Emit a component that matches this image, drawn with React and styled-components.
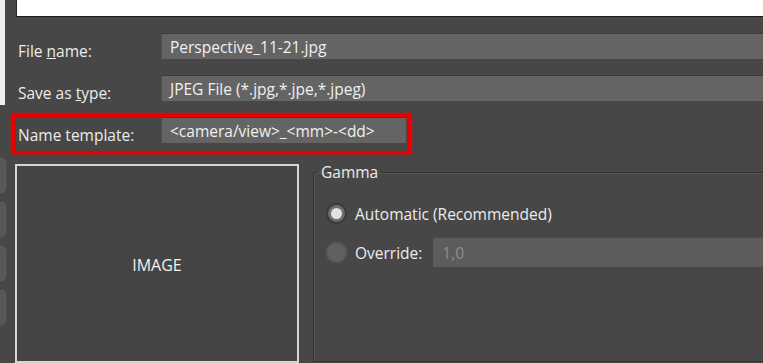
import React from 'react'
import styled, { createGlobalStyle } from 'styled-components'

const GlobalStyle = createGlobalStyle`
  html, body {
    margin: 0;
    padding: 0;
    background: #474747;
    overflow: hidden;
  }
  body {
    font-family: "Open Sans", "Noto Sans", "Liberation Sans", sans-serif;
    color: #e8e8e8;
  }
`

const Page = styled.div`
  display: flex;
  flex-direction: row;
  width: 763px;
  height: 363px;
  overflow: hidden;
  background: #474747;
`

const LeftRail = styled.div`
  display: flex;
  flex-direction: column;
  width: 7px;
  flex-shrink: 0;
`

const BehindWindow = styled.div`
  height: 105px;
  width: 5px;
  background: #f0f0f0;
  margin-bottom: 53px;
`

const RailButtons = styled.div`
  display: flex;
  flex-direction: column;
  gap: 9px;
`

const RailButton = styled.div`
  width: 5px;
  height: 33px;
  background: #575757;
  border: 1px solid #606060;
  border-left: none;
  border-radius: 0 5px 5px 0;
`

const Main = styled.div`
  flex: 1;
  display: flex;
  flex-direction: column;
  min-width: 0;
`

const FileList = styled.div`
  height: 19px;
  margin-left: 9px;
  background: #ffffff;
  border-left: 1px solid #2a2a2a;
  border-bottom: 1px solid #1c1c1c;
`

const Form = styled.div`
  display: flex;
  flex-direction: column;
  gap: 2px;
  margin-top: 13px;
  margin-left: 5px;
`

const Row = styled.div`
  display: grid;
  grid-template-columns: 143px ${p => (p.$highlight ? '245px' : '1fr')};
  align-items: start;
  padding: 0 0 6px 3px;
  border: 3px solid ${p => (p.$highlight ? '#e80000' : 'transparent')};
  width: ${p => (p.$highlight ? 'fit-content' : 'auto')};
  margin-right: ${p => (p.$highlight ? '0' : '-30px')};
  padding-right: ${p => (p.$highlight ? '2px' : '0')};
  box-shadow: ${p =>
    p.$highlight ? '0 0 3px 1px rgba(255, 0, 0, 0.55), inset 0 0 2px rgba(255, 0, 0, 0.5)' : 'none'};
`

const Label = styled.label`
  font-size: 15.5px;
  line-height: 20px;
  padding-top: 8px;
  color: #ececec;
  white-space: nowrap;
`

const Field = styled.div`
  height: 26px;
  box-sizing: border-box;
  background: #646464;
  border-top: 1px solid #3a3a3a;
  border-left: 1px solid #4e4e4e;
  padding: 0 8px;
  font-size: 15.5px;
  line-height: 27px;
  color: #f0f0f0;
  white-space: nowrap;
  overflow: hidden;
`

const Lower = styled.div`
  display: flex;
  flex-direction: row;
  gap: 14px;
  margin-top: 10px;
  margin-left: 8px;
`

const ImageBox = styled.div`
  width: 284px;
  height: 199px;
  box-sizing: border-box;
  flex-shrink: 0;
  border: 2px solid #d6d6d6;
  background: #444444;
  display: flex;
  align-items: center;
  justify-content: center;
  font-size: 16px;
  color: #f2f2f2;
  padding-top: 2px;
`

const GroupBox = styled.fieldset`
  flex: 1;
  margin: 0 -20px 0 0;
  padding: 18px 0 0 13px;
  height: 198px;
  box-sizing: border-box;
  border: 1px solid #353535;
  box-shadow: inset 1px 1px 0 #565656;
  display: flex;
  flex-direction: column;
  gap: 9px;
  min-width: 0;
`

const Legend = styled.legend`
  font-size: 15.5px;
  line-height: 16px;
  padding: 0 4px;
  margin-left: -10px;
  color: #ececec;
`

const Option = styled.div`
  display: flex;
  flex-direction: row;
  align-items: center;
  height: 30px;
  gap: 8px;
`

const Radio = styled.span`
  width: 21px;
  height: 21px;
  box-sizing: border-box;
  border-radius: 50%;
  flex-shrink: 0;
  margin-left: -1px;
  background: ${p => (p.$checked ? '#6e6e6e' : '#606060')};
  border: 2px solid ${p => (p.$checked ? '#3a3a3a' : '#5a5a5a')};
  display: flex;
  align-items: center;
  justify-content: center;

  &::after {
    content: '';
    display: ${p => (p.$checked ? 'block' : 'none')};
    width: 11px;
    height: 11px;
    border-radius: 50%;
    background: #e2e2e2;
  }
`

const OptionText = styled.span`
  font-size: 15.5px;
  color: #ececec;
  white-space: nowrap;
  padding-top: 2px;
`

const ValueField = styled.div`
  flex: 1;
  height: 30px;
  box-sizing: border-box;
  margin-left: 3px;
  background: #5c5c5c;
  border-top: 1px solid #4a4a4a;
  padding: 0 9px;
  font-size: 15.5px;
  line-height: 31px;
  color: #8c8c8c;
`

export default function App() {
  return (
    <Page>
      <GlobalStyle />
      <LeftRail>
        <BehindWindow />
        <RailButtons>
          <RailButton />
          <RailButton />
          <RailButton />
          <RailButton />
        </RailButtons>
      </LeftRail>

      <Main>
        <FileList />

        <Form>
          <Row>
            <Label>File <u>n</u>ame:</Label>
            <Field>Perspective_11-21.jpg</Field>
          </Row>
          <Row>
            <Label>Save as <u>t</u>ype:</Label>
            <Field>JPEG File (*.jpg,*.jpe,*.jpeg)</Field>
          </Row>
          <Row $highlight>
            <Label>Name template:</Label>
            <Field>&lt;camera/view&gt;_&lt;mm&gt;-&lt;dd&gt;</Field>
          </Row>
        </Form>

        <Lower>
          <ImageBox>IMAGE</ImageBox>
          <GroupBox>
            <Legend>Gamma</Legend>
            <Option>
              <Radio $checked />
              <OptionText>Automatic (Recommended)</OptionText>
            </Option>
            <Option>
              <Radio />
              <OptionText>Override:</OptionText>
              <ValueField>1,0</ValueField>
            </Option>
          </GroupBox>
        </Lower>
      </Main>
    </Page>
  )
}
